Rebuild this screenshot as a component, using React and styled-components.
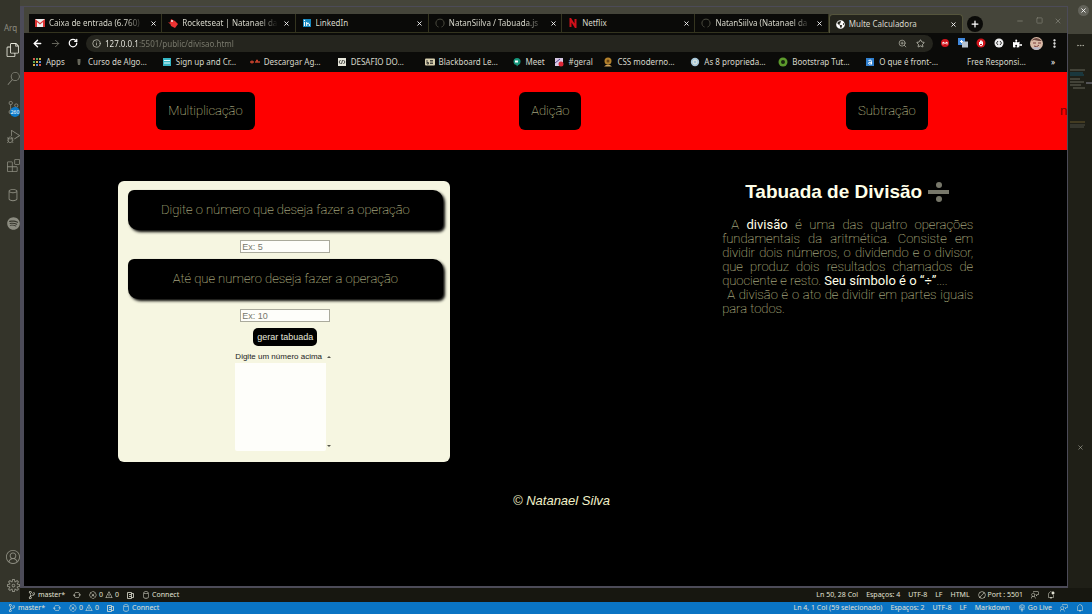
import React from "react";
import styled, { createGlobalStyle } from "styled-components";
import {
  VscFiles, VscSearch, VscSourceControl, VscDebugAlt, VscExtensions, VscDatabase,
  VscAccount, VscSettingsGear, VscSync, VscError, VscWarning, VscCircleSlash,
  VscFeedback, VscBell, VscBellDot, VscBroadcast,
} from "react-icons/vsc";
import { FaSpotify, FaPuzzlePiece, FaGlobeAmericas } from "react-icons/fa";
import { ArrowLeft, ArrowRight, RotateCw, Info, ZoomIn, Star, X, Plus, Minus, Square, MoreVertical, MoreHorizontal } from "lucide-react";

const Global = createGlobalStyle`
  * { box-sizing: border-box; }
  body { margin: 0; background: #000; font-family: "Noto Sans", sans-serif; }
  button, input, select { font: inherit; margin: 0; padding: 0; border: 0; }
  svg { display: block; flex: none; }
  a { color: inherit; text-decoration: none; }
`;

const Desktop = styled.div`
  min-height: 100vh;
  display: flex;
  flex-direction: column;
  overflow: hidden;
`;
const Workspace = styled.div`
  flex: 1;
  display: flex;
`;
const ActivityBar = styled.nav`
  width: 20px;
  padding: 22px 0 2px;
  display: flex;
  flex-direction: column;
  align-items: flex-end;
  background: #34342a;
  color: #8c8c80;
`;
const MenuWord = styled.span`
  width: 16px;
  height: 12px;
  font-size: 8px;
  line-height: 12px;
  margin-bottom: 1px;
`;
const ActivityButton = styled.button`
  position: relative;
  width: 14px;
  height: 29px;
  margin-bottom: ${(p) => (p.$gap ? "auto" : 0)};
  display: grid;
  place-items: center;
  background: none;
  color: ${(p) => (p.$active ? "#e8e8dc" : "inherit")};
`;
const Badge = styled.span`
  position: absolute;
  right: 0;
  bottom: 5px;
  width: 10px;
  height: 10px;
  border-radius: 5px;
  background: #0a7acb;
  color: #fff;
  font-size: 5px;
  line-height: 10px;
`;
const Stack = styled.div`
  flex: 1;
  min-width: 0;
  display: flex;
  flex-direction: column;
`;
const Screen = styled.div`
  flex: 1;
  display: flex;
  background: #45453a;
`;
const Browser = styled.section`
  flex: 1;
  min-width: 0;
  margin-top: 6px;
  border: solid #4c4b58;
  border-width: 1px 1px 2px 4px;
  display: flex;
  flex-direction: column;
  background: #45453a;
`;
const TabStrip = styled.div`
  display: flex;
  align-items: flex-end;
  height: 26px;
  padding: 7px 0 0 5px;
`;
const Tabs = styled.div`
  flex: 1;
  min-width: 0;
  height: 19px;
  display: flex;
`;
const Tab = styled.div`
  flex: 1;
  min-width: 0;
  padding: 0 3px 0 6px;
  display: flex;
  align-items: center;
  gap: 4px;
  background: ${(p) => (p.$active ? "#24241c" : "#0a0a08")};
  border: 1px solid ${(p) => (p.$active ? "#55553c" : "#34341f")};
  border-width: ${(p) => (p.$active ? "1px 1px 0 1px" : "0 1px 1px 0")};
  border-radius: ${(p) => (p.$active ? "4px 4px 0 0" : "0")};
`;
const TabTitle = styled.button`
  flex: 1;
  min-width: 0;
  overflow: hidden;
  text-align: left;
  white-space: nowrap;
  background: none;
  color: #d8d8cc;
  font-size: 8px;
  line-height: 16px;
  ${(p) => p.$fade && "mask-image: linear-gradient(90deg, #000 80%, transparent);"}
`;
const IconButton = styled.button`
  width: ${(p) => p.$w || 10}px;
  height: 16px;
  display: grid;
  place-items: center;
  background: none;
  color: ${(p) => p.$color || "#fff"};
`;
const WindowTools = styled.div`
  width: 104px;
  height: 19px;
  padding: 0 4px;
  display: flex;
  align-items: center;
`;
const NewTab = styled.button`
  width: 16px;
  height: 16px;
  margin-right: auto;
  border-radius: 8px;
  display: grid;
  place-items: center;
  background: #0a0a08;
  color: #fff;
`;
const WindowButtons = styled.div`
  display: flex;
  gap: 9px;
  padding-bottom: 6px;
`;
const Toolbar = styled.div`
  height: 20px;
  padding: 0 6px 0 5px;
  display: flex;
  align-items: center;
  background: #0b0b09;
`;
const NavButtons = styled.div`
  display: flex;
  gap: 2px;
`;
const AddressBar = styled.div`
  flex: 1;
  height: 17px;
  margin: 0 4px 0 5px;
  padding: 0 6px;
  border-radius: 9px;
  display: flex;
  align-items: center;
  gap: 4px;
  background: #25251e;
  color: #c8c8bc;
`;
const Address = styled.input`
  flex: 1;
  min-width: 0;
  font-size: 8px;
  color: transparent;
  background: linear-gradient(90deg, #f4f4ec 34px, #7d7d70 34px);
  background-clip: text;
  outline: none;
`;
const Extensions = styled.div`
  display: flex;
  align-items: center;
  gap: 2px;
`;
const Bookmarks = styled.nav`
  height: 19px;
  padding: 0 9px 2px 8px;
  display: flex;
  align-items: center;
  background: #0b0b09;
  color: #d8d8cc;
  font-size: 8px;
`;
const Bookmark = styled.a`
  flex: ${(p) => p.$w} 1 0;
  min-width: 0;
  display: flex;
  align-items: center;
  gap: 4px;
  white-space: nowrap;
`;
const Page = styled.main`
  flex: 1;
  background: #000;
  font-family: "Liberation Sans", sans-serif;
`;
const SiteHeader = styled.header`
  position: relative;
  height: 78px;
  padding-right: 7px;
  display: flex;
  justify-content: space-around;
  align-items: center;
  background: #fe0000;
  overflow: hidden;
`;
const NavLink = styled.a`
  padding: 0 12px;
  border-radius: 6px;
  background: #000;
  color: #e0e0b4;
  font: 100 13px/38px Roboto, sans-serif;
`;
const Ticker = styled.span`
  position: absolute;
  left: calc(100% - 7px);
  top: 31px;
  color: #7c0000;
  font-size: 13px;
  line-height: 16px;
`;
const Content = styled.div`
  padding: 31px 9% 0;
  display: flex;
  justify-content: space-between;
  align-items: flex-start;
`;
const Card = styled.form`
  width: 332px;
  height: 281px;
  padding: 9px 7px 9px 10px;
  border-radius: 6px;
  display: flex;
  flex-direction: column;
  align-items: center;
  background: #f6f6e1;
`;
const Prompt = styled.label`
  width: 100%;
  height: 40px;
  margin-bottom: 10px;
  border-radius: 6px 10px 6px 10px;
  box-shadow: 2px 2px 3px #000;
  background: #000;
  color: #e0e0b4;
  font: 100 13px/39px Roboto, sans-serif;
  text-align: center;
`;
const NumberBox = styled.input`
  width: 90px;
  height: 13px;
  margin-bottom: 6px;
  padding: 0 1px;
  border: 1px solid #aaaa9c;
  background: #fefefa;
  font-size: 9px;
  line-height: 11px;
  &::placeholder { color: #77776c; opacity: 1; }
`;
const Generate = styled.button`
  height: 18px;
  margin-bottom: 6px;
  padding: 0 4px;
  border-radius: 5px;
  background: #000;
  color: #e8e8dc;
  font-size: 9px;
`;
const ResultArea = styled.div`
  display: flex;
  padding-right: 3px;
`;
const Results = styled.select`
  width: 91px;
  height: 99px;
  overflow: hidden;
  background: #fefefa;
  color: #22221c;
  font-size: 8px;
  outline: none;
  option { padding: 0; min-height: 11px; line-height: 11px; background: #f6f6e1; overflow: visible; }
`;
const Scroller = styled.span`
  width: 6px;
  padding: 4px 0 3px;
  display: flex;
  flex-direction: column;
  justify-content: space-between;
  align-items: center;
`;
const Article = styled.article`
  width: 251px;
  color: #e0e0b4;
`;
const Title = styled.h1`
  margin: 0 0 15px;
  display: flex;
  justify-content: center;
  align-items: center;
  gap: 6px;
  color: #ffffe8;
  font-size: 19px;
  line-height: 22px;
`;
const Text = styled.p`
  margin: 0;
  font: 100 13px/14px Roboto, sans-serif;
  text-align: justify;
  text-indent: ${(p) => p.$indent}px;
  b { font-weight: 400; color: #ffffe8; }
`;
const Footer = styled.footer`
  padding: 31px 0 0 32px;
  color: #f0f0c8;
  font-size: 13px;
  font-style: italic;
  line-height: 16px;
  text-align: center;
`;
const EditorEdge = styled.aside`
  width: 24px;
  padding: 5px 0 0;
  display: flex;
  flex-direction: column;
  align-items: center;
  background: linear-gradient(#45453a 34px, #1f1f17 34px);
`;
const CloseCircle = styled.button`
  width: 11px;
  height: 11px;
  margin: 0 0 21px 6px;
  border-radius: 6px;
  display: grid;
  place-items: center;
  background: #63635a;
  color: #fff;
`;
const PanelClose = styled(IconButton)`
  margin-top: 304px;
`;
const Status = styled.footer`
  height: ${(p) => (p.$main ? 12 : 14)}px;
  padding: 0 ${(p) => (p.$main ? 8 : 37)}px 0 8px;
  display: flex;
  justify-content: space-between;
  background: ${(p) => (p.$main ? "#0a74c4" : "#171710")};
  color: #e2e2d4;
  font-size: 7px;
  line-height: ${(p) => (p.$main ? 12 : 14)}px;
`;
const StatusGroup = styled.div`
  display: flex;
  align-items: center;
  gap: 8px;
`;
const StatusItem = styled.span`
  display: flex;
  align-items: center;
  gap: 2px;
  white-space: nowrap;
`;

const Icon = ({ kind }) => {
  const shapes = {
    gmail: <><rect y="1" width="10" height="8" fill="#eee" /><path d="M0 9V1l5 4 5-4v8H8V4L5 6.500 2 4v5z" fill="#d33" /></>,
    rocket: <><path d="M3 1l4 2 3 3-3 4-4-2-1-3z" fill="#e33" /><path d="M0 4l3 1-1 1z" fill="#e33" /><circle cx="4" cy="3" r="1" fill="#eee" /></>,
    linkedin: <><rect x="1" y="1" width="8" height="8" fill="#1688be" /><path d="M2.500 4v4M4.700 8V4M4.700 6q1.500-2 2.600 0v2" stroke="#fff" fill="none" /><circle cx="2.500" cy="2.500" r=".7" fill="#fff" /></>,
    github: <path d="M3.500 9C0 8 0 2 4 1.200h2C10 2 10 8 6.500 9" fill="none" stroke="#4c4c40" />,
    netflix: <path d="M2.500 9V1l5 8V1" fill="none" stroke="#d0101a" strokeWidth="2" />,
    apps: [1, 4, 7].map((y, j) => [1, 4, 7].map((x, i) => (
      <rect key={`${x}${y}`} x={x} y={y} width="2" height="2" fill={["#d65a4a", "#5aa860", "#d8b04a", "#5a8ad6"][(i + j) % 4]} />))),
    bulb: <path d="M3.500 2h3v3L6 8H4L3.500 5z" fill="#66665a" />,
    form: <><rect x="1" y="1" width="8" height="8" fill="#36b6c4" /><path d="M2 3.500h6M2 6h6" stroke="#e8ffff" /></>,
    dash: <path d="M0 5h4M5 5h5M2 3.500v3M6 3.500h2" stroke="#c4412c" strokeWidth="1.500" />,
    code: <><rect x="1" y="1" width="8" height="8" fill="#e8e8dc" /><path d="M3.500 3L2 5l1.500 2M6.500 3L8 5 6.500 7M5.500 3l-1 4" stroke="#222" strokeWidth=".8" fill="none" /></>,
    board: <><rect y="1.500" width="10" height="7" rx="1" fill="#d8d0b0" /><path d="M2 3v4h1.500V5.500H2M5 3.500h3M5 5h3M5 6.500h3" stroke="#222" fill="none" strokeWidth=".8" /></>,
    meet: <><circle cx="5" cy="4.500" r="3.500" fill="#16967c" /><path d="M4 7h3l-2 2.500z" fill="#16967c" /><path d="M3 3.500h3v2H3z" fill="#fff" /></>,
    slack: <><rect x="1" y="1" width="8" height="8" fill="#d8c8e4" /><path d="M1 6l5-4" stroke="#54408c" /><circle cx="7" cy="7" r="2.500" fill="#dc2838" /></>,
    person: <><circle cx="5" cy="4" r="3.500" fill="#b4822c" /><path d="M1 9.500q4-4 8 0z" fill="#cfa45a" /><circle cx="5" cy="4" r="1.500" fill="#694414" /></>,
    globe: <><circle cx="5" cy="5" r="4.200" fill="#a7c6d8" /><circle cx="5" cy="5" r="2" fill="none" stroke="#e9eee0" /></>,
    green: <><circle cx="5" cy="5" r="4.500" fill="#5c9a2c" /><circle cx="5" cy="5" r="2" fill="#1a2410" /></>,
    alura: <><rect x="1" y="1" width="8" height="8" fill="#3080d0" /><path d="M3.500 3.500q3-1.500 3 1v3M6.500 5.300q-3.500-.5-3 1.200 1 1.500 3 0" stroke="#fff" fill="none" /></>,
    adblock: <><circle cx="5" cy="5" r="4" fill="#d2141c" /><path d="M3 6.500V4l2 1.500L7 4v2.500" stroke="#fff" fill="none" /></>,
    translate: <><rect x="0" y="0" width="7" height="7" fill="#4088dc" /><rect x="4" y="3.500" width="6" height="6" fill="#b8c4d0" /><path d="M2 3.500h3M3.500 2v3" stroke="#fff" /></>,
    hand: <><circle cx="5" cy="5" r="4.500" fill="#d2141c" /><path d="M3.500 4v3q1.500 2 3 0V3.500M4.500 2.500V6M5.600 2.500V6" stroke="#fff" fill="none" /></>,
    dots: <><circle cx="5" cy="5" r="4.500" fill="#eee" /><path d="M4 3L2.500 5 4 7M6 3l1.500 2L6 7" stroke="#333" fill="none" /></>,
  };
  return <svg width="10" height="10" viewBox="0 0 10 10">{shapes[kind]}</svg>;
};

const Avatar = () => (
  <svg width="13" height="13" viewBox="0 0 13 13">
    <circle cx="6.500" cy="6.500" r="6.500" fill="#d9b9a6" />
    <path d="M1 4Q6-2 12 4L9 4 4 3z" fill="#6d4a42" />
    <path d="M3 6h3M8 6h3M4 9q3 2 5-1" stroke="#7b3d3c" fill="none" />
    <path d="M2 11q4-2 9 0Q6 15 2 11" fill="#b9b6c4" />
  </svg>
);

const Divide = () => (
  <svg width="22" height="22" viewBox="0 0 22 22" fill="#77776a">
    <circle cx="11" cy="4" r="3" /><rect y="9" width="21" height="4" /><circle cx="11" cy="18" r="3" />
  </svg>
);

const Ruler = () => (
  <svg width="7" height="7" viewBox="0 0 7 7" fill="none" stroke="currentColor">
    <path d="M.5.500h4v6h-4zM2 2.500h2M2 4.500h2M4.500 1.500h2v4h-2" strokeWidth=".8" />
  </svg>
);

const MiniMap = () => (
  <svg width="24" height="82" viewBox="0 -16 24 82" fill="none">
    <path d="M2 1h15" stroke="#66665a" /><path d="M2 4h13M2 6h14" stroke="#175064" />
    <path d="M2 10h10M2 13h14M2 16h11M5 19h12" stroke="#66665a" /><path d="M18 14h6" stroke="#8a8a9a" />
    <path d="M2 53h15" stroke="#68582c" /><path d="M2 56h15M2 58h14" stroke="#4e4e44" />
  </svg>
);

const tabs = [
  ["gmail", "Caixa de entrada (6.760)", 1], ["rocket", "Rocketseat | Natanael da", 1], ["linkedin", "LinkedIn"],
  ["github", "NatanSiilva / Tabuada.js", 1], ["netflix", "Netflix"], ["github", "NatanSiilva (Natanael da", 1],
];
const bookmarks = [
  ["apps", "Apps", 42], ["bulb", "Curso de Algo…", 88], ["form", "Sign up and Cr…", 88], ["dash", "Descargar Ag…", 87],
  ["code", "DESAFIO DO…", 88], ["board", "Blackboard Le…", 87], ["meet", "Meet", 43], ["slack", "#geral", 49],
  ["person", "CSS moderno…", 87], ["globe", "As 8 proprieda…", 88], ["green", "Bootstrap Tut…", 87],
  ["alura", "O que é front-…", 88], ["none", "Free Responsi…", 95],
];

const StatusLeft = () => (
  <StatusGroup>
    <StatusItem><VscSourceControl size={8} />master*</StatusItem>
    <StatusItem><VscSync size={8} /></StatusItem>
    <StatusItem><VscError size={8} />0<VscWarning size={8} />0</StatusItem>
    <StatusItem><Ruler /></StatusItem>
    <StatusItem><VscDatabase size={8} />Connect</StatusItem>
  </StatusGroup>
);

export default function App() {
  return (
    <Desktop>
      <Global />
      <Workspace>
        <ActivityBar aria-label="Editor">
          <MenuWord>Arq</MenuWord>
          <ActivityButton $active aria-label="Files"><VscFiles size={14} /></ActivityButton>
          <ActivityButton aria-label="Search"><VscSearch size={13} /></ActivityButton>
          <ActivityButton aria-label="Source control"><VscSourceControl size={13} /><Badge>260</Badge></ActivityButton>
          <ActivityButton aria-label="Debug"><VscDebugAlt size={13} /></ActivityButton>
          <ActivityButton aria-label="Extensions"><VscExtensions size={13} /></ActivityButton>
          <ActivityButton aria-label="Database"><VscDatabase size={14} /></ActivityButton>
          <ActivityButton $gap aria-label="Spotify"><FaSpotify size={13} /></ActivityButton>
          <ActivityButton aria-label="Account"><VscAccount size={14} /></ActivityButton>
          <ActivityButton aria-label="Settings"><VscSettingsGear size={13} /></ActivityButton>
        </ActivityBar>
        <Stack>
          <Screen>
            <Browser>
              <TabStrip>
                <Tabs>
                  {tabs.map(([icon, title, fade]) => (
                    <Tab key={title}>
                      <Icon kind={icon} />
                      <TabTitle $fade={fade}>{title}</TabTitle>
                      <IconButton aria-label="Close tab"><X size={7} strokeWidth={3} /></IconButton>
                    </Tab>
                  ))}
                  <Tab $active>
                    <FaGlobeAmericas size={9} color="#fff" />
                    <TabTitle>Multe Calculadora</TabTitle>
                    <IconButton aria-label="Close tab"><X size={7} strokeWidth={3} /></IconButton>
                  </Tab>
                </Tabs>
                <WindowTools>
                  <NewTab aria-label="New tab"><Plus size={10} strokeWidth={3} /></NewTab>
                  <WindowButtons>
                    <IconButton $color="#8b8b80" aria-label="Minimize"><Minus size={8} /></IconButton>
                    <IconButton $color="#8b8b80" aria-label="Maximize"><Square size={7} /></IconButton>
                    <IconButton $color="#8b8b80" aria-label="Close"><X size={8} /></IconButton>
                  </WindowButtons>
                </WindowTools>
              </TabStrip>
              <Toolbar>
                <NavButtons>
                  <IconButton $w={16} aria-label="Back"><ArrowLeft size={11} strokeWidth={3} /></IconButton>
                  <IconButton $w={16} $color="#6e6e64" aria-label="Forward"><ArrowRight size={11} /></IconButton>
                  <IconButton $w={16} aria-label="Reload"><RotateCw size={10} strokeWidth={3} /></IconButton>
                </NavButtons>
                <AddressBar>
                  <Info size={9} />
                  <Address aria-label="Address" defaultValue="127.0.0.1:5501/public/divisao.html" />
                  <IconButton $w={14} $color="#b0b0a4" aria-label="Zoom"><ZoomIn size={9} /></IconButton>
                  <IconButton $w={14} $color="#d0d0c4" aria-label="Bookmark"><Star size={9} /></IconButton>
                </AddressBar>
                <Extensions>
                  {["adblock", "translate", "hand", "dots"].map((k) => (
                    <IconButton key={k} $w={16} aria-label={k}><Icon kind={k} /></IconButton>
                  ))}
                  <IconButton $w={16} aria-label="Extensions"><FaPuzzlePiece size={9} /></IconButton>
                  <IconButton $w={18} aria-label="Profile"><Avatar /></IconButton>
                  <IconButton $w={14} aria-label="Menu"><MoreVertical size={11} strokeWidth={3} /></IconButton>
                </Extensions>
              </Toolbar>
              <Bookmarks aria-label="Bookmarks">
                {bookmarks.map(([icon, title, w]) => (
                  <Bookmark key={title} href="#" $w={w}><Icon kind={icon} />{title}</Bookmark>
                ))}
                <IconButton aria-label="More bookmarks">»</IconButton>
              </Bookmarks>
              <Page>
                <SiteHeader>
                  <NavLink href="#">Multiplicação</NavLink>
                  <NavLink href="#">Adição</NavLink>
                  <NavLink href="#">Subtração</NavLink>
                  <Ticker>n</Ticker>
                </SiteHeader>
                <Content>
                  <Card>
                    <Prompt htmlFor="first">Digite o número que deseja fazer a operação</Prompt>
                    <NumberBox id="first" placeholder="Ex: 5" />
                    <Prompt htmlFor="last">Até que numero deseja fazer a operação</Prompt>
                    <NumberBox id="last" placeholder="Ex: 10" />
                    <Generate type="button">gerar tabuada</Generate>
                    <ResultArea>
                      <Results size={9} aria-label="Tabuada"><option>Digite um número acima</option></Results>
                      <Scroller>
                        <svg width="4" height="3" viewBox="0 0 4 3"><path d="M0 2l2-2 2 2z" fill="#55554c" /></svg>
                        <svg width="4" height="3" viewBox="0 0 4 3"><path d="M0 0l2 2 2-2z" fill="#55554c" /></svg>
                      </Scroller>
                    </ResultArea>
                  </Card>
                  <Article>
                    <Title>Tabuada de Divisão <Divide /></Title>
                    <Text $indent={9}>A <b>divisão</b> é uma das quatro operações fundamentais da aritmética. Consiste em dividir dois números, o dividendo e o divisor, que produz dois resultados chamados de quociente e resto. <b>Seu símbolo é o “÷”</b>....</Text>
                    <Text $indent={5}>A divisão é o ato de dividir em partes iguais para todos.</Text>
                  </Article>
                </Content>
                <Footer>© Natanael Silva</Footer>
              </Page>
            </Browser>
            <EditorEdge>
              <CloseCircle aria-label="Close editor"><X size={7} strokeWidth={3} /></CloseCircle>
              <IconButton $w={14} $color="#b0b0a4" aria-label="More"><MoreHorizontal size={9} /></IconButton>
              <MiniMap />
              <PanelClose $color="#b0b0a4" aria-label="Close panel"><X size={7} /></PanelClose>
            </EditorEdge>
          </Screen>
          <Status>
            <StatusLeft />
            <StatusGroup>
              <StatusItem>Ln 50, 28 Col</StatusItem>
              <StatusItem>Espaços: 4</StatusItem>
              <StatusItem>UTF-8</StatusItem>
              <StatusItem>LF</StatusItem>
              <StatusItem>HTML</StatusItem>
              <StatusItem><VscCircleSlash size={8} />Port : 5501</StatusItem>
              <StatusItem><VscFeedback size={8} /></StatusItem>
              <StatusItem><VscBellDot size={8} /></StatusItem>
            </StatusGroup>
          </Status>
        </Stack>
      </Workspace>
      <Status $main>
        <StatusLeft />
        <StatusGroup>
          <StatusItem>Ln 4, 1 Col (59 selecionado)</StatusItem>
          <StatusItem>Espaços: 2</StatusItem>
          <StatusItem>UTF-8</StatusItem>
          <StatusItem>LF</StatusItem>
          <StatusItem>Markdown</StatusItem>
          <StatusItem><VscBroadcast size={8} />Go Live</StatusItem>
          <StatusItem><VscFeedback size={8} /></StatusItem>
          <StatusItem><VscBell size={8} /></StatusItem>
        </StatusGroup>
      </Status>
    </Desktop>
  );
}
